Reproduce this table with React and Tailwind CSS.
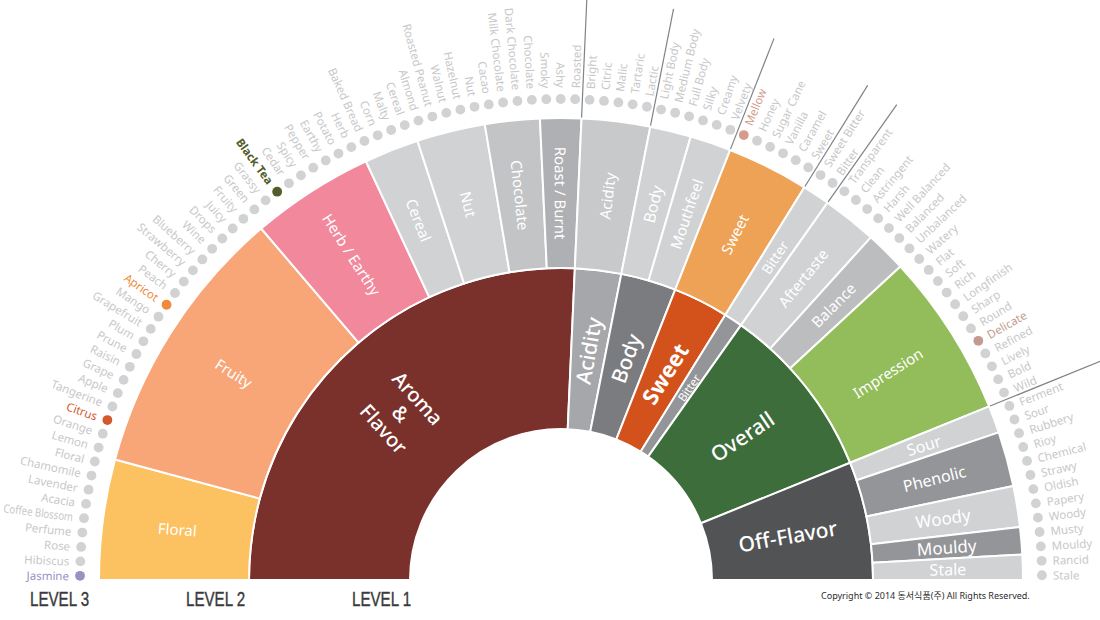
import React from 'react';

// wheel geometry (page pixels)
const CX = 561;
const CY = 580;
const STEP = 1.7205;
const R_IN = 151;
const R_L1 = 312;
const R_L2 = 462;
const R_DOT = 481;
const R_TXT = 492;
const R_LINE = 582;

const angleOf = (i) => (i === 'L' ? 180 : i === 'R' ? 0 : 179.5 - STEP * i);

function pt(r, deg) {
  const a = (deg * Math.PI) / 180;
  return [CX + r * Math.cos(a), CY - r * Math.sin(a)];
}

function sector(r0, r1, from, to) {
  const a1 = angleOf(from);
  const a2 = angleOf(to);
  const [x1, y1] = pt(r1, a1);
  const [x2, y2] = pt(r1, a2);
  const [x3, y3] = pt(r0, a2);
  const [x4, y4] = pt(r0, a1);
  return `M${x1} ${y1}A${r1} ${r1} 0 0 1 ${x2} ${y2}L${x3} ${y3}A${r0} ${r0} 0 0 0 ${x4} ${y4}Z`;
}

// [name, colour, bold, fitted length]
const FLAVORS = [
  ['Jasmine', '#9d8fc4'], 'Hibiscus', 'Rose', 'Perfume', ['Coffee Blossom', null, false, 70], 'Acacia', 'Lavender', 'Chamomile', 'Floral',
  'Lemon', 'Orange', ['Citrus', '#d3582b'], 'Tangerine', 'Apple', 'Grape', 'Raisin', 'Prune', 'Plum', 'Grapefruit',
  'Mango', ['Apricot', '#f08a3c'], 'Peach', 'Cherry', 'Strawberry', 'Blueberry', 'Wine', 'Drops', 'Juicy', 'Fruity',
  'Green', 'Grassy', ['Black Tea', '#525d2b', true], 'Cedar', 'Spicy', 'Pepper', 'Earthy', 'Potato', 'Herb',
  'Baked Bread', 'Corn', 'Malty', 'Cereal',
  'Almond', 'Roasted Peanut', 'Walnut', 'Hazelnut', 'Nut',
  'Cacao', 'Milk Chocolate', 'Dark Chocolate', 'Chocolate',
  'Smoky', 'Ashy', 'Roasted',
  'Bright', 'Citric', 'Malic', 'Tartaric', 'Lactic',
  'Light Body', 'Medium Body', 'Full Body', 'Silky', 'Creamy', 'Velvety',
  ['Mellow', '#d49c8c'], 'Honey', 'Sugar Cane', 'Vanilla', 'Caramel', 'Sweet',
  'Sweet Bitter', 'Bitter',
  'Transparent', 'Clean', 'Astringent', 'Harsh', 'Well Balanced', 'Balanced', 'Unbalanced', 'Watery', 'Flat', 'Soft',
  'Rich', 'Longfinish', 'Sharp', 'Round', ['Delicate', '#c4998f'], 'Refined', 'Lively', 'Bold', 'Wild',
  'Ferment', 'Sour', 'Rubbery', 'Rioy', 'Chemical', 'Strawy', 'Oldish', 'Papery', 'Woody', 'Musty', 'Mouldy', 'Rancid', 'Stale',
];

const LEVEL1 = [
  { from: 'L', to: 53.5, fill: '#7a312c' },
  { from: 53.5, to: 58.5, fill: '#a6a7aa' },
  { from: 58.5, to: 64.5, fill: '#7b7c7f' },
  { from: 64.5, to: 70.5, fill: '#d3521c' },
  { from: 70.5, to: 72.5, fill: '#939598' },
  { from: 72.5, to: 91.5, fill: '#3e6d3c' },
  { from: 91.5, to: 'R', fill: '#525355' },
];

const LEVEL1_LABELS = [
  { lines: ['Aroma', '&', 'Flavor'], a: 133.75, rot: 48, size: 20, weight: 500 },
  { lines: ['Acidity'], a: 83.2, rot: -80, size: 21, weight: 500 },
  { lines: ['Body'], a: 73.7, rot: -70, size: 21, weight: 500 },
  { lines: ['Sweet'], a: 63.4, rot: -58, size: 22, weight: 700 },
  { lines: ['Bitter'], a: 56.5, rot: -55, size: 11.5, weight: 400 },
  { lines: ['Overall'], a: 38.4, rot: -34, size: 21, weight: 500 },
  { lines: ['Off-Flavor'], a: 11, rot: -10, size: 21, weight: 500 },
];

const LEVEL2 = [
  { name: 'Floral', from: 'L', to: 8.5, fill: '#fcc160', rot: 4 },
  { name: 'Fruity', from: 8.5, to: 28.5, fill: '#f8a577' },
  { name: 'Herb / Earthy', from: 28.5, to: 37.5, fill: '#f2889c' },
  { name: 'Cereal', from: 37.5, to: 41.5, fill: '#d1d2d4' },
  { name: 'Nut', from: 41.5, to: 46.5, fill: '#d1d2d4' },
  { name: 'Chocolate', from: 46.5, to: 50.5, fill: '#c3c4c6' },
  { name: 'Roast / Burnt', from: 50.5, to: 53.5, fill: '#afb0b3' },
  { name: 'Acidity', from: 53.5, to: 58.5, fill: '#c8c9cb' },
  { name: 'Body', from: 58.5, to: 61.5, fill: '#d1d2d4', size: 16 },
  { name: 'Mouthfeel', from: 61.5, to: 64.5, fill: '#d1d2d4' },
  { name: 'Sweet', from: 64.5, to: 70.5, fill: '#eea255' },
  { name: 'Bitter', from: 70.5, to: 72.5, fill: '#d1d2d4', size: 14 },
  { name: 'Aftertaste', from: 72.5, to: 76.5, fill: '#d1d2d4' },
  { name: 'Balance', from: 76.5, to: 79.5, fill: '#bcbdbf' },
  { name: 'Impression', from: 79.5, to: 91.5, fill: '#93bd5a' },
  { name: 'Sour', from: 91.5, to: 93.5, fill: '#d1d2d4', rot: -17, size: 16 },
  { name: 'Phenolic', from: 93.5, to: 97.5, fill: '#939598', rot: -14, size: 16 },
  { name: 'Woody', from: 97.5, to: 100.5, fill: '#d1d2d4', rot: -8, size: 17 },
  { name: 'Mouldy', from: 100.5, to: 102.5, fill: '#939598', rot: -4, size: 17 },
  { name: 'Stale', from: 102.5, to: 'R', fill: '#d1d2d4', rot: -1, size: 16 },
];

const DIVIDERS = [53.5, 58.5, 64.5, 70.5, 72.5, 91.5];

function FlavorWheel() {
  return (
    <svg width="1100" height="583" viewBox="0 0 1100 583" className="block">
      {/* level 1 */}
      {LEVEL1.map((s, i) => (
        <path key={i} d={sector(R_IN, R_L1, s.from, s.to)} fill={s.fill} stroke="#fff" strokeWidth="2" strokeLinejoin="round" />
      ))}
      {/* level 2 */}
      {LEVEL2.map((s) => (
        <path key={s.name} d={sector(R_L1, R_L2, s.from, s.to)} fill={s.fill} stroke="#fff" strokeWidth="2" strokeLinejoin="round" />
      ))}

      {/* group dividers */}
      {DIVIDERS.map((d) => {
        const [x1, y1] = pt(R_L2 + 1, angleOf(d));
        const [x2, y2] = pt(R_LINE, angleOf(d));
        return <line key={d} x1={x1} y1={y1} x2={x2} y2={y2} stroke="#808285" strokeWidth="1.2" />;
      })}

      {/* level 1 labels */}
      {LEVEL1_LABELS.map((l) => {
        const [x, y] = pt(231, l.a);
        const lh = l.size * 1.15;
        const off = ((l.lines.length - 1) * lh) / 2;
        return (
          <g key={l.lines[0]} transform={`translate(${x} ${y}) rotate(${l.rot})`}>
            <text textAnchor="middle" dominantBaseline="central" fill="#fff" fontSize={l.size} fontWeight={l.weight}>
              {l.lines.map((t, i) => (
                <tspan key={i} x="0" y={i * lh - off}>{t}</tspan>
              ))}
            </text>
          </g>
        );
      })}

      {/* level 2 labels */}
      {LEVEL2.map((s) => {
        const mid = (angleOf(s.from) + angleOf(s.to)) / 2;
        const [x, y] = pt(387, mid);
        const rot = s.rot ?? (mid > 90 ? 180 - mid : -mid);
        return (
          <text
            key={s.name}
            x={x}
            y={y}
            transform={`rotate(${rot} ${x} ${y})`}
            textAnchor="middle"
            dominantBaseline="central"
            fill="#fff"
            fontSize={s.size ?? 15}
          >
            {s.name}
          </text>
        );
      })}

      {/* level 3 dots + words */}
      {FLAVORS.map((f, i) => {
        const [name, color, bold, fit] = Array.isArray(f) ? f : [f];
        const a = angleOf(i);
        const [dx, dy] = pt(R_DOT, a);
        const [tx, ty] = pt(R_TXT, a);
        const left = a > 90;
        const rot = left ? 180 - a : -a;
        return (
          <g key={name + i}>
            <circle cx={dx} cy={dy} r="4.9" fill={color ?? '#d1d2d4'} />
            <text
              x={tx}
              y={ty}
              transform={`rotate(${rot} ${tx} ${ty})`}
              textAnchor={left ? 'end' : 'start'}
              dominantBaseline="central"
              fontSize="11.5"
              fontWeight={bold ? 700 : 400}
              fill={color ?? '#c7c8ca'}
              textLength={fit}
              lengthAdjust={fit ? 'spacingAndGlyphs' : undefined}
            >
              {name}
            </text>
          </g>
        );
      })}
    </svg>
  );
}

export default function App() {
  return (
    <div className="w-[1100px] h-[620px] bg-white overflow-hidden font-['Noto_Sans','DejaVu_Sans',sans-serif]">
      <FlavorWheel />
      <div className="flex items-center h-[30px] text-[#3a3a3c]">
        <div className="w-[186px] pl-[30px]">
          <div className="font-['Liberation_Sans',sans-serif] text-[21px] leading-none scale-x-[0.72] origin-left [-webkit-text-stroke:0.4px_#3a3a3c]">LEVEL 3</div>
        </div>
        <div className="w-[166px]">
          <div className="font-['Liberation_Sans',sans-serif] text-[21px] leading-none scale-x-[0.72] origin-left [-webkit-text-stroke:0.4px_#3a3a3c]">LEVEL 2</div>
        </div>
        <div className="w-[469px]">
          <div className="font-['Liberation_Sans',sans-serif] text-[21px] leading-none scale-x-[0.72] origin-left [-webkit-text-stroke:0.4px_#3a3a3c]">LEVEL 1</div>
        </div>
        <div className="text-[9px] text-[#2b2b2b] font-['Noto_Sans','Noto_Sans_CJK_KR',sans-serif] -mt-[4px]">
          Copyright © 2014 동서식품(주) All Rights Reserved.
        </div>
      </div>
    </div>
  );
}
